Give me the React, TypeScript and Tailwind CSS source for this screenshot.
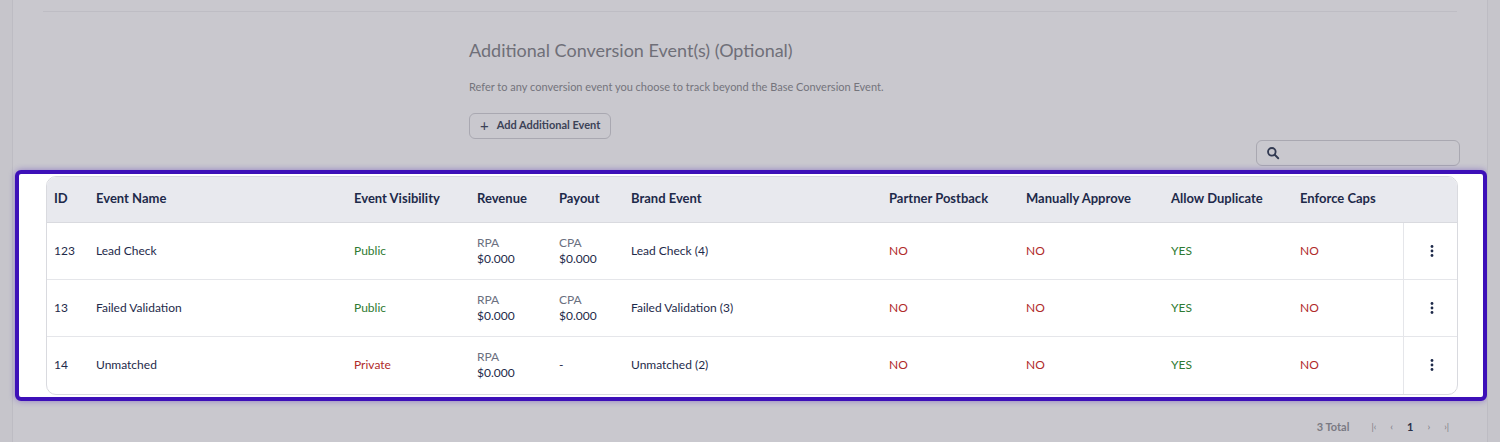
const cols = "grid-cols-[49px_258px_123px_82px_72px_258px_137px_145px_129px_103px_56px]";

type Row = {
  id: string;
  name: string;
  vis: "Public" | "Private";
  payout: boolean;
  brand: string;
};

const rows: Row[] = [
  { id: "123", name: "Lead Check", vis: "Public", payout: true, brand: "Lead Check (4)" },
  { id: "13", name: "Failed Validation", vis: "Public", payout: true, brand: "Failed Validation (3)" },
  { id: "14", name: "Unmatched", vis: "Private", payout: false, brand: "Unmatched (2)" },
];

const headers = [
  "ID",
  "Event Name",
  "Event Visibility",
  "Revenue",
  "Payout",
  "Brand Event",
  "Partner Postback",
  "Manually Approve",
  "Allow Duplicate",
  "Enforce Caps",
  "",
];

function Dots() {
  return (
    <svg width="4" height="12" viewBox="0 0 4 12" fill="#1e2a4a">
      <circle cx="2" cy="1.5" r="1.4" />
      <circle cx="2" cy="6" r="1.4" />
      <circle cx="2" cy="10.5" r="1.4" />
    </svg>
  );
}

export default function App() {
  return (
    <div
      className="w-[1500px] h-[442px] bg-[#c9c8ce] flex overflow-hidden text-[#1e2a4a]"
      style={{ fontFamily: "Lato, 'Noto Sans', sans-serif" }}
    >
      <div className="w-[13px] shrink-0 border-r border-[#bdbcc3] bg-[#c6c5cb]" />
      <div className="flex-1 min-w-0 flex flex-col">
        <div className="mx-[30px] mt-[11px] border-t border-[#bebdc4]" />
        <div className="pl-[456px] pt-[25px]">
          <div className="text-[18px] text-[#6f6f78]">Additional Conversion Event(s) (Optional)</div>
          <div className="mt-[15px] text-[11px] text-[#74747c]">
            Refer to any conversion event you choose to track beyond the Base Conversion Event.
          </div>
          <button className="mt-[17px] h-[26px] px-[10px] rounded-[6px] border border-[#a9a8b1] flex items-center gap-[8px] text-[11px] font-bold text-[#3c4257]">
            <span className="text-[15px] font-normal leading-none">+</span>
            Add Additional Event
          </button>
        </div>
        <div className="flex justify-end pr-[27px] mt-[1px]">
          <div className="w-[204px] h-[26px] rounded-[6px] border border-[#a9a8b1] flex items-center px-[9px]">
            <svg width="14" height="14" viewBox="0 0 24 24" fill="none" stroke="#323a52" strokeWidth="3.2" strokeLinecap="round">
              <circle cx="10" cy="10" r="6.5" />
              <path d="M15 15l6 6" />
            </svg>
          </div>
        </div>
        <div className="ml-[2px] mt-[4px] h-[231px] rounded-[6px] border-[4px] border-[#3d10b8] bg-white pt-[2px] pl-[27px] pr-[25px] shadow-[0_0_6px_rgba(60,16,184,0.4)]">
          <div className="rounded-[10px] border border-[#d9dadf] overflow-hidden text-[12px]">
            <div className={`grid ${cols} h-[46px] items-center bg-[#e8e9ee] border-b border-[#d9dadf] text-[13px] font-bold`}>
              {headers.map((h, i) => (
                <div key={i} className={i === 0 ? "pl-[7px]" : ""}>{h}</div>
              ))}
            </div>
            {rows.map((r, i) => (
              <div
                key={r.id}
                className={`grid ${cols} h-[57px] items-center ${i < rows.length - 1 ? "border-b border-[#e5e6ea]" : ""}`}
              >
                <div className="pl-[7px]">{r.id}</div>
                <div>{r.name}</div>
                <div className={r.vis === "Public" ? "text-[#2e7a32]" : "text-[#b02a2a]"}>{r.vis}</div>
                <div className="leading-[16px]">
                  <div className="text-[#6b7080]">RPA</div>
                  <div>$0.000</div>
                </div>
                <div className="leading-[16px]">
                  {r.payout ? (
                    <>
                      <div className="text-[#6b7080]">CPA</div>
                      <div>$0.000</div>
                    </>
                  ) : (
                    <div>-</div>
                  )}
                </div>
                <div>{r.brand}</div>
                <div className="text-[#b02a2a]">NO</div>
                <div className="text-[#b02a2a]">NO</div>
                <div className="text-[#2e7a32]">YES</div>
                <div className="text-[#b02a2a]">NO</div>
                <div className="h-full border-l border-[#e5e6ea] flex items-center justify-center">
                  <Dots />
                </div>
              </div>
            ))}
          </div>
        </div>
        <div className="flex justify-end items-center gap-[14px] pr-[38px] mt-[18px] text-[11px] text-[#7a7a83]">
          <span className="font-bold mr-[8px]">3 Total</span>
          <span className="text-[9px]">|‹</span>
          <span className="text-[10px]">‹</span>
          <span className="font-bold text-[#2a3047]">1</span>
          <span className="text-[10px]">›</span>
          <span className="text-[9px]">›|</span>
        </div>
      </div>
      <div className="w-[13px] shrink-0 border-l border-[#bdbcc3] bg-[#c6c5cb]" />
    </div>
  );
}
